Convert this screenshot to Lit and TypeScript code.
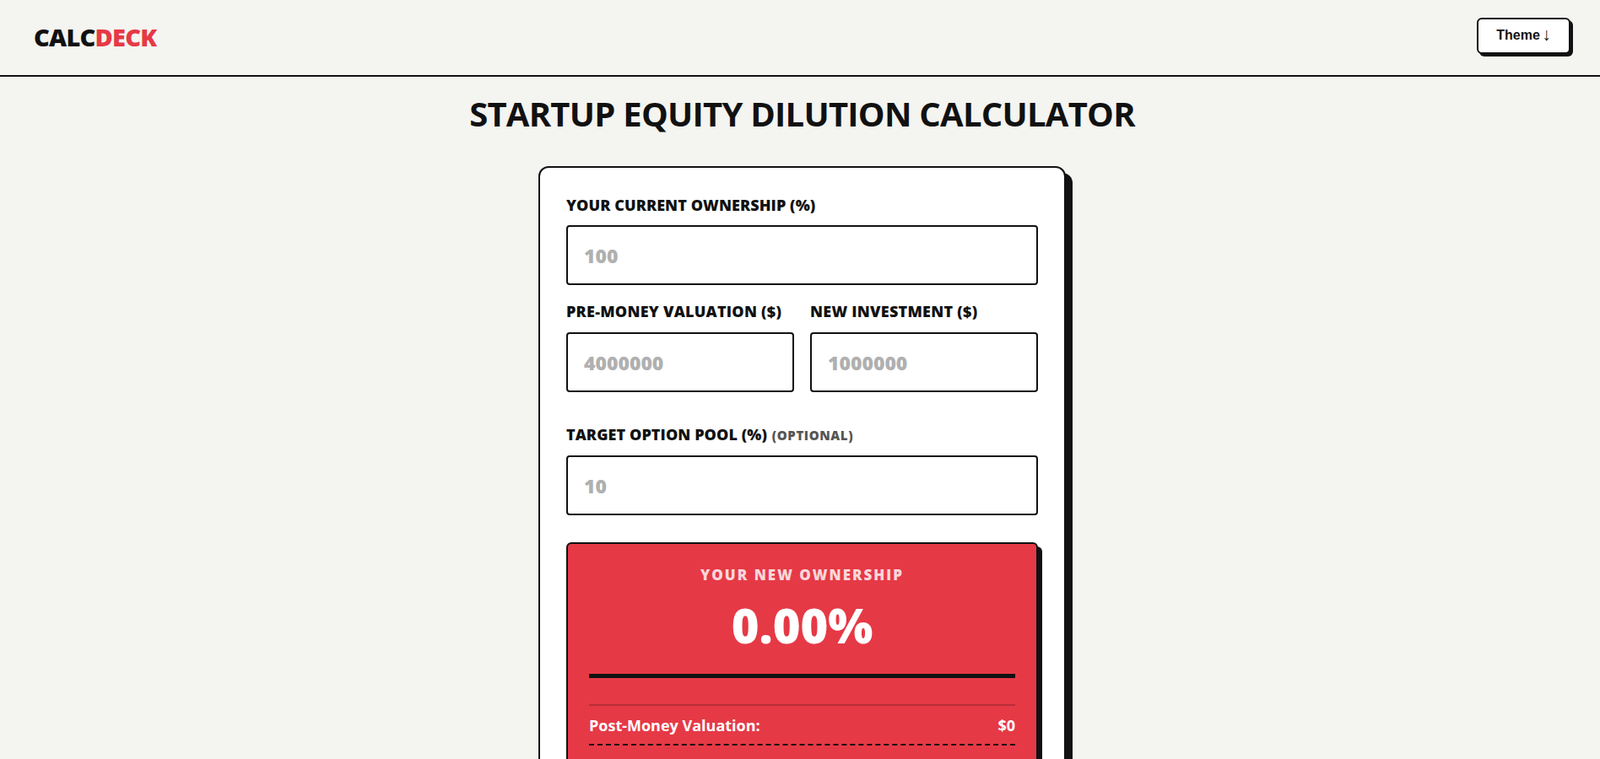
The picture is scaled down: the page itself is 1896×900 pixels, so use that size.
import { LitElement, html, css } from "lit";
import { customElement } from "lit/decorators.js";

@customElement("app-root")
export class AppRoot extends LitElement {
  static styles = css`
    :host {
      display: block;
      height: 900px;
      overflow: hidden;
      background: #f4f4f0;
      color: #111;
      font-family: "Open Sans", "Noto Sans", sans-serif;
    }
    .top {
      display: flex;
      justify-content: space-between;
      align-items: center;
      height: 85px;
      border-bottom: 2px solid #111;
      padding: 0 35px 4px 40px;
    }
    .logo {
      font-size: 29px;
      font-weight: 800;
      letter-spacing: -0.75px;
      line-height: 1;
      margin-top: 1px;
    }
    .logo span {
      color: #e63946;
    }
    .theme {
      box-sizing: border-box;
      width: 111px;
      height: 43px;
      background: #fff;
      color: #111;
      border: 2px solid #111;
      border-radius: 6px;
      box-shadow: 3px 3px 0 #111;
      font-family: "Liberation Sans", Arial, sans-serif;
      font-size: 16px;
      font-weight: 700;
      padding: 0 0 1px;
    }
    .theme i {
      font-style: normal;
      font-weight: 400;
      font-size: 21px;
      line-height: 0;
      vertical-align: -1px;
      margin-left: -2px;
    }
    main {
      display: flex;
      flex-direction: column;
      align-items: center;
      padding-left: 5px;
    }
    h1 {
      margin: 18px 0 37px;
      font-size: 40px;
      line-height: 51px;
      font-weight: 700;
      letter-spacing: -0.75px;
      white-space: nowrap;
    }
    .card {
      box-sizing: border-box;
      width: 625px;
      background: #fff;
      border: 2px solid #111;
      border-radius: 12px;
      box-shadow: 8px 8px 0 #111;
      padding: 31px 31px 60px;
    }
    label {
      display: block;
      font-size: 18px;
      line-height: 26px;
      font-weight: 800;
      letter-spacing: 0.08px;
      margin-bottom: 11px;
      white-space: nowrap;
    }
    label small {
      font-size: 15px;
      font-weight: 800;
      color: #555;
      letter-spacing: 0.6px;
      margin-left: 1px;
    }
    input {
      display: block;
      box-sizing: border-box;
      width: 100%;
      height: 71px;
      border: 2px solid #111;
      border-radius: 4px;
      background: #fff;
      padding: 0 19px;
      font-family: inherit;
      font-size: 23px;
      font-weight: 800;
      outline: none;
    }
    input::placeholder {
      color: #b0b0b0;
      opacity: 1;
    }
    .pair {
      display: grid;
      grid-template-columns: 1fr 1fr;
      gap: 19px;
      margin: 18px 0 37px;
    }
    .pair label {
      letter-spacing: 0.25px;
      margin-bottom: 12px;
    }
    .panel {
      margin-top: 32px;
      background: #e63946;
      color: #fff;
      border: 2px solid #111;
      border-radius: 6px;
      box-shadow: 5px 5px 0 #111;
      padding: 26px 25px 120px;
    }
    .kicker {
      text-align: center;
      font-size: 17px;
      line-height: 22px;
      font-weight: 800;
      letter-spacing: 2px;
      opacity: 0.8;
    }
    .big {
      text-align: center;
      font-size: 56px;
      line-height: 76px;
      font-weight: 800;
      margin-top: 10px;
    }
    .bar {
      height: 5px;
      background: #111;
      margin-top: 20px;
    }
    .rows {
      margin-top: 31px;
      border-top: 2px solid rgba(0, 0, 0, 0.2);
    }
    .row {
      display: flex;
      justify-content: space-between;
      align-items: center;
      height: 45px;
      border-bottom: 2px dashed #111;
      font-size: 18px;
      font-weight: 700;
    }
  `;

  render() {
    return html`
      <header class="top">
        <div class="logo">CALC<span>DECK</span></div>
        <button class="theme">Theme <i>↓</i></button>
      </header>
      <main>
        <h1>STARTUP EQUITY DILUTION CALCULATOR</h1>
        <section class="card">
          <label>YOUR CURRENT OWNERSHIP (%)</label>
          <input type="number" placeholder="100" />
          <div class="pair">
            <div>
              <label>PRE-MONEY VALUATION ($)</label>
              <input type="number" placeholder="4000000" />
            </div>
            <div>
              <label>NEW INVESTMENT ($)</label>
              <input type="number" placeholder="1000000" />
            </div>
          </div>
          <label>TARGET OPTION POOL (%) <small>(OPTIONAL)</small></label>
          <input type="number" placeholder="10" />
          <div class="panel">
            <div class="kicker">YOUR NEW OWNERSHIP</div>
            <div class="big">0.00%</div>
            <div class="bar"></div>
            <div class="rows">
              <div class="row"><span>Post-Money Valuation:</span><span>$0</span></div>
            </div>
          </div>
        </section>
      </main>
    `;
  }
}
